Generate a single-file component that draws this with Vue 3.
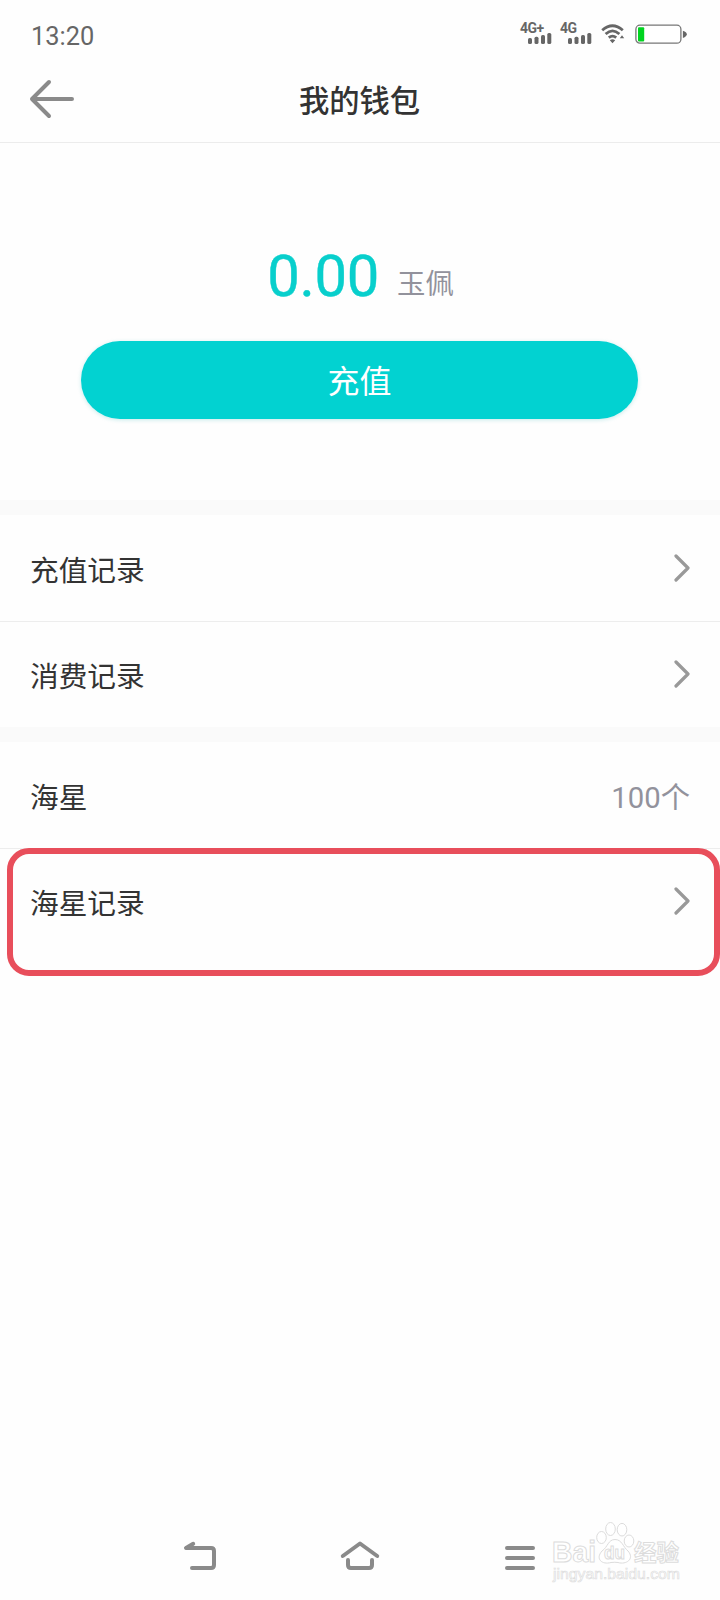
<template>
  <div class="phone">
    <div class="status-bar">
      <span class="clock">13:20</span>
      <div class="status-icons">
        <svg v-for="net in networks" :key="net" class="signal" width="32" height="24" viewBox="0 -2 32 24">
          <text class="net" x="0" y="10.3">{{ net }}</text>
          <rect x="8" y="15" width="4" height="6" rx="1.6" />
          <rect x="14.5" y="13.7" width="4" height="7.3" rx="1.6" />
          <rect x="21" y="12" width="4" height="9" rx="1.6" />
          <rect x="27.3" y="10" width="4" height="11" rx="1.6" />
        </svg>
        <svg class="wifi" width="24" height="24" viewBox="0 -2 24 24">
          <path d="M1.2 7.2Q11.5-1.8 21.8 7.2" />
          <path d="M4.6 11Q11.5 4.8 18.4 11" />
          <path d="M7.8 14.6Q11.5 11.6 15.2 14.6" />
          <path class="solid" d="M8.8 17.2Q11.5 15.4 14.2 17.2L11.5 20.3ZM18.8 15.3L21 12.2L23.2 15.3Z" />
        </svg>
        <svg class="battery" width="53" height="24" viewBox="0 -2 53 24">
          <rect class="shell" x="0.9" y="2.2" width="45" height="18" rx="4" />
          <rect class="level" x="3" y="4.2" width="6.2" height="14.3" rx="1" />
          <path d="M47.9 7.7Q51.8 9 51.8 11.3T47.9 15Z" />
        </svg>
      </div>
    </div>

    <div class="header">
      <svg class="back" width="46" height="40" viewBox="0 0 46 40">
        <path d="M20 3L3 20L20 37M3 20H43" />
      </svg>
      <h1>我的钱包</h1>
    </div>

    <div class="balance">
      <div class="amount">
        <span class="number">0.00</span>
        <span class="unit">玉佩</span>
      </div>
      <button class="recharge">充值</button>
    </div>

    <div v-for="(group, i) in groups" :key="i" class="group">
      <div v-for="item in group" :key="item.title" class="row" :class="{ marked: item.marked }">
        <span>{{ item.title }}</span>
        <span v-if="item.value" class="value">{{ item.value }}</span>
        <svg v-else class="arrow" width="16" height="28" viewBox="0 0 16 28">
          <path d="M2 2L14 14L2 26" />
        </svg>
      </div>
    </div>

    <div class="nav-bar">
      <svg width="40" height="36" viewBox="0 0 40 36">
        <path d="M13.2 5.8L6 10H31Q34 10 34 13V27Q34 30 31 30H12" />
      </svg>
      <svg width="40" height="36" viewBox="0 0 40 36">
        <path d="M2.8 18L20 5.5L37.2 18M8 22V27Q8 30 11 30H29Q32 30 32 27V22" />
      </svg>
      <svg width="40" height="36" viewBox="0 0 40 36">
        <path d="M7 10H33M7 20H33M7 30H33" />
      </svg>
    </div>

    <svg class="watermark" width="136" height="68" viewBox="0 0 136 68">
      <text class="brand" x="1" y="42" textLength="44" lengthAdjust="spacingAndGlyphs">Bai</text>
      <ellipse cx="50.5" cy="17.5" rx="4.8" ry="6" />
      <ellipse cx="59.5" cy="9" rx="4.8" ry="6.5" />
      <ellipse cx="71" cy="9.7" rx="4.8" ry="6.3" />
      <ellipse cx="78" cy="21" rx="4.8" ry="6" />
      <path d="M64 19.5C71 19.5 72 27 77 31C84 39 75 45 67 42.5Q64 42 60 42.5C51 45 44 39 51 31C57 27 57 19.5 64 19.5Z" />
      <text class="du" x="53" y="39" textLength="21" lengthAdjust="spacingAndGlyphs">du</text>
      <text class="cn" x="83" y="40.5" textLength="45" lengthAdjust="spacingAndGlyphs">经验</text>
      <text class="site" x="2" y="59" textLength="127" lengthAdjust="spacingAndGlyphs">jingyan.baidu.com</text>
    </svg>
  </div>
</template>

<script setup>
const networks = ['4G+', '4G']

const groups = [
  [{ title: '充值记录' }, { title: '消费记录' }],
  [{ title: '海星', value: '100个' }, { title: '海星记录', marked: true }]
]
</script>

<style>
body {
  background: #fefefe;
}
</style>

<style scoped>
.phone {
  position: relative;
  display: flex;
  flex-direction: column;
  width: 720px;
  height: 1600px;
  overflow: hidden;
  background: #fefefe;
  color: #333;
  font-family: Roboto, "Noto Sans CJK SC", sans-serif;
}

.status-bar {
  display: flex;
  justify-content: space-between;
  height: 60px;
  padding: 0 32px 0 31px;
  box-sizing: border-box;
}

.clock {
  padding-top: 21px;
  font-size: 25.4px;
  line-height: 30px;
  color: #666;
}

.status-icons {
  display: flex;
  padding-top: 21px;
}

.status-icons svg {
  overflow: visible;
  fill: #666;
}

.signal {
  margin-right: 8px;
}

.net {
  font-size: 14px;
  font-weight: 700;
  letter-spacing: -0.6px;
}

.wifi {
  margin-left: 1px;
}

.status-icons .wifi path {
  fill: none;
  stroke: #666;
  stroke-width: 2.8;
}

.status-icons .wifi .solid {
  fill: #666;
  stroke: none;
}

.battery {
  margin-left: 10px;
}

.battery .shell {
  fill: #fff;
  stroke: #777;
  stroke-width: 1.3;
}

.battery .level {
  fill: #00d420;
}

.header {
  display: grid;
  grid-template-columns: 60px 1fr 60px;
  align-items: center;
  height: 83px;
  padding: 0 30px 0 29px;
  box-sizing: border-box;
  border-bottom: 1px solid #ececec;
}

.back {
  margin-top: -4px;
  fill: none;
  stroke: #8a8a8a;
  stroke-width: 4;
  stroke-linecap: round;
  stroke-linejoin: round;
}

h1 {
  margin: 0;
  padding-top: 2px;
  text-align: center;
  font-size: 30.3px;
  font-weight: 500;
  line-height: 40px;
}

.balance {
  display: flex;
  flex-direction: column;
  align-items: center;
  height: 357px;
  padding: 98px 1px 0 0;
  box-sizing: border-box;
}

.amount {
  display: flex;
  align-items: baseline;
  gap: 18px;
  height: 100px;
  padding-left: 2px;
  line-height: 70px;
}

.number {
  font-size: 58px;
  letter-spacing: -0.3px;
  color: #08cfcc;
  -webkit-text-stroke: 0.4px #08cfcc;
}

.unit {
  /* sits a touch above the digits' baseline */
  transform: translateY(-2px);
  font-size: 28.4px;
  color: #92929c;
}

.recharge {
  width: 557px;
  height: 78px;
  padding: 0 0 2px;
  border: none;
  border-radius: 39px;
  background: #02d2d1;
  box-shadow: 0 1px 4px rgba(2, 170, 170, 0.22);
  color: #fff;
  font-family: inherit;
  font-size: 32px;
}

.group {
  border-top: 15px solid #fafafa;
}

.row {
  display: flex;
  align-items: center;
  justify-content: space-between;
  height: 106px;
  padding: 0 30px;
  box-sizing: border-box;
  font-size: 28.7px;
}

.row + .row {
  border-top: 1px solid #ededed;
}

.value {
  padding-bottom: 1px;
  font-size: 29.3px;
  color: #92929c;
}

.arrow {
  margin-top: -1px;
  fill: none;
  stroke: #999;
  stroke-width: 3.2;
  stroke-linecap: round;
  stroke-linejoin: round;
}

.marked {
  position: relative;
}

/* red frame drawn over the row and slightly below it */
.marked::after {
  content: "";
  position: absolute;
  top: -1px;
  left: 7px;
  right: 0;
  height: 128px;
  box-sizing: border-box;
  border: 6px solid #e84e5b;
  border-radius: 22px;
}

.nav-bar {
  display: grid;
  grid-template-columns: repeat(3, 160px);
  justify-content: center;
  justify-items: center;
  margin-top: auto;
  padding-bottom: 26px;
}

.nav-bar svg {
  fill: none;
  stroke: #8a8a8a;
  stroke-width: 4;
  stroke-linecap: round;
  stroke-linejoin: round;
}

.watermark {
  position: absolute;
  left: 551px;
  top: 1520px;
  fill: #fff;
  stroke: #dcdcdc;
  stroke-width: 1;
}

.brand {
  font-family: "Liberation Sans", sans-serif;
  font-size: 29px;
  font-weight: 700;
}

.du {
  font-family: "Liberation Sans", sans-serif;
  font-size: 19px;
  font-weight: 700;
}

.cn {
  font-size: 23px;
  font-weight: 700;
}

.site {
  font-family: "Liberation Sans", sans-serif;
  font-size: 14.5px;
  stroke-width: 0.6;
}
</style>
